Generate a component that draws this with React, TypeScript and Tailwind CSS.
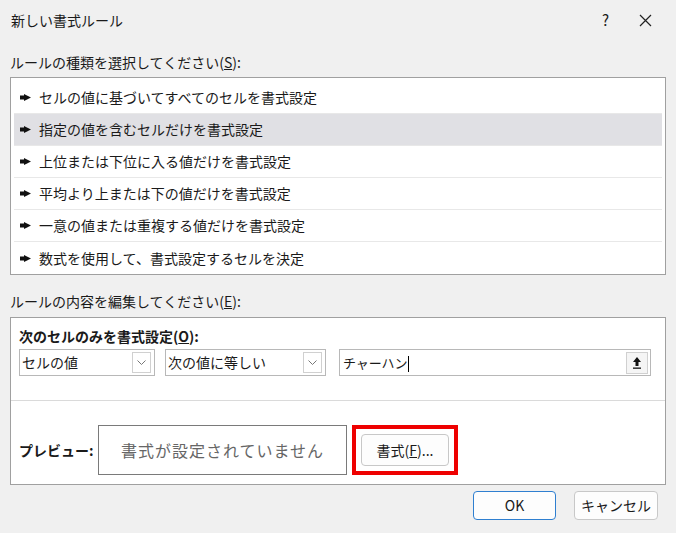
const font = { fontFamily: '"Noto Sans CJK JP", "Noto Sans", sans-serif' };

const rules = [
  'セルの値に基づいてすべてのセルを書式設定',
  '指定の値を含むセルだけを書式設定',
  '上位または下位に入る値だけを書式設定',
  '平均より上または下の値だけを書式設定',
  '一意の値または重複する値だけを書式設定',
  '数式を使用して、書式設定するセルを決定',
];

function Combo({ label, width }: { label: string; width: string }) {
  return (
    <div className={`flex items-center justify-between h-[27px] border border-[#b8b8b8] bg-white pl-[2px] pr-[3px] ${width}`}>
      <span className="text-[14px] text-[#1a1a1a]">{label}</span>
      <span className="flex items-center justify-center w-[19px] h-[21px] border border-[#d0d0d0] text-[#777]">
        <svg width="9" height="6" viewBox="0 0 9 6"><path d="M0.5 0.5 L4.5 4.5 L8.5 0.5" fill="none" stroke="#777" /></svg>
      </span>
    </div>
  );
}

export default function App() {
  return (
    <div className="w-[676px] h-[533px] bg-[#f0f0f0] flex flex-col text-[#1a1a1a]" style={font}>
      <div className="flex items-center justify-between h-[40px] pl-[11px] pr-[4px]">
        <span className="text-[14px]">新しい書式ルール</span>
        <div className="flex items-center gap-[30px] pr-[20px]">
          <span className="text-[15px]">?</span>
          <svg width="13" height="13" viewBox="0 0 13 13"><path d="M1 1 L12 12 M12 1 L1 12" stroke="#222" strokeWidth="1.2" /></svg>
        </div>
      </div>
      <div className="px-[10px] pt-[12px] pb-[4px] text-[14px]">ルールの種類を選択してください(<u>S</u>):</div>
      <div className="mx-[10px] h-[198px] bg-white border border-[#a0a0a0] pt-[4px] px-[3px]">
        {rules.map((r, i) => (
          <div key={r} className={`flex items-center h-[32px] pl-[6px] text-[14px] ${i < 5 ? 'border-b border-[#e8e8e8]' : ''} ${i === 1 ? 'bg-[#e0e0e4]' : ''}`}>
            <svg width="11" height="7" viewBox="0 0 11 7" className="mr-[8px]"><path d="M0 1.5 H4 L4 0 L11 3.5 L4 7 L4 5.5 H0 Z" fill="#111" /></svg>
            {r}
          </div>
        ))}
      </div>
      <div className="px-[10px] pt-[16px] pb-[5px] text-[14px]">ルールの内容を編集してください(<u>E</u>):</div>
      <div className="mx-[10px] h-[168px] bg-white border border-[#a0a0a0] flex flex-col">
        <div className="px-[8px] pt-[8px] text-[14px] font-bold">次のセルのみを書式設定(<u>O</u>):</div>
        <div className="flex items-center gap-[10px] px-[8px] pt-[2px]">
          <Combo label="セルの値" width="w-[136px]" />
          <Combo label="次の値に等しい" width="w-[161px]" />
          <div className="flex items-center justify-between h-[27px] w-[312px] ml-[3px] border border-[#b8b8b8] pl-[3px] pr-[2px]">
            <span className="text-[13px]">チャーハン<span className="inline-block w-px h-[16px] bg-black align-middle" /></span>
            <span className="flex items-center justify-center w-[22px] h-[22px] border border-[#d0d0d0] bg-[#f5f5f5]">
              <svg width="10" height="13" viewBox="0 0 10 13"><path d="M5 1 L1 6 H3.5 V10 H6.5 V6 H9 Z" fill="#111" /><rect x="1" y="11.5" width="8" height="1.3" fill="#111" /></svg>
            </span>
          </div>
        </div>
        <div className="mt-[24px] border-t border-[#dadada]" />
        <div className="flex items-center pl-[8px] mt-[24px]">
          <span className="text-[14px] font-bold w-[79px]">プレビュー:</span>
          <div className="w-[249px] h-[50px] border border-[#7a7a7a] flex items-center justify-center text-[16px] text-[#666] tracking-[1px]">書式が設定されていません</div>
          <div className="ml-[5px] w-[106px] h-[50px] border-[4px] border-[#ee0000] flex items-center justify-center">
            <div className="w-[88px] h-[32px] border border-[#c8c8c8] rounded-[4px] bg-[#fdfdfd] flex items-center justify-center text-[14px]">書式(<u>F</u>)...</div>
          </div>
        </div>
      </div>
      <div className="flex justify-end gap-[18px] pr-[18px] pt-[6px]">
        <button className="w-[83px] h-[29px] border border-[#2f7fd0] rounded-[4px] bg-[#fdfdfd] text-[14px]">OK</button>
        <button className="w-[84px] h-[29px] border border-[#c8c8c8] rounded-[4px] bg-[#fdfdfd] text-[14px]">キャンセル</button>
      </div>
    </div>
  );
}
